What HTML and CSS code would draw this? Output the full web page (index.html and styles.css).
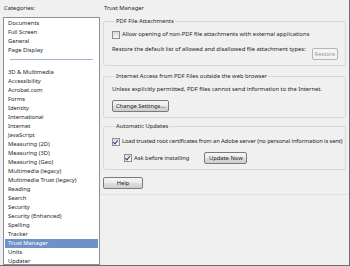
FILE: index.html
```html
<!DOCTYPE html>
<html lang="en">
<head>
  <meta charset="UTF-8">
  <title>Preferences - Trust Manager</title>
  <link rel="stylesheet" href="styles.css">
</head>
<body>
  <div class="window">
    <div class="sidebar">
      <div class="cat-label">Categories:</div>
      <ul class="cat-list">
        <li>Documents</li>
        <li>Full Screen</li>
        <li>General</li>
        <li>Page Display</li>
        <li class="sep"></li>
        <li>3D &amp; Multimedia</li>
        <li>Accessibility</li>
        <li>Acrobat.com</li>
        <li>Forms</li>
        <li>Identity</li>
        <li>International</li>
        <li>Internet</li>
        <li>JavaScript</li>
        <li>Measuring (2D)</li>
        <li>Measuring (3D)</li>
        <li>Measuring (Geo)</li>
        <li>Multimedia (legacy)</li>
        <li>Multimedia Trust (legacy)</li>
        <li>Reading</li>
        <li>Search</li>
        <li>Security</li>
        <li>Security (Enhanced)</li>
        <li>Spelling</li>
        <li>Tracker</li>
        <li class="selected">Trust Manager</li>
        <li>Units</li>
        <li>Updater</li>
      </ul>
    </div>

    <div class="panel">
      <div class="panel-title">Trust Manager</div>

      <fieldset class="group group-attach">
        <legend>PDF File Attachments</legend>
        <div class="check"><span class="box"></span>Allow opening of non-PDF file attachments with external applications</div>
        <div class="restore-row">
          <span>Restore the default list of allowed and disallowed file attachment types:</span>
          <button class="btn btn-restore" disabled>Restore</button>
        </div>
      </fieldset>

      <fieldset class="group group-internet">
        <legend>Internet Access from PDF Files outside the web browser</legend>
        <div class="note">Unless explicitly permitted, PDF files cannot send information to the Internet.</div>
        <button class="btn btn-settings">Change Settings...</button>
      </fieldset>

      <fieldset class="group group-updates">
        <legend>Automatic Updates</legend>
        <div class="check check-certs"><span class="box checked"></span>Load trusted root certificates from an Adobe server (no personal information is sent)</div>
        <div class="ask-row">
          <div class="check"><span class="box checked"></span>Ask before installing</div>
          <button class="btn btn-update">Update Now</button>
        </div>
      </fieldset>

      <button class="btn btn-help">Help</button>
      <div class="panel-end"></div>
    </div>
  </div>
</body>
</html>
```

FILE: styles.css
```css
html, body {
  margin: 0;
  padding: 0;
}

body {
  font-family: 'Noto Sans', 'Open Sans', sans-serif;
  font-size: 5.8px;
  color: #1e1e1e;
  background-color: #f0f0f0;
}

.window {
  width: 350px;
  height: 266px;
  box-sizing: border-box;
  border-right: 1px solid #6e6e6e;
  border-bottom: 1px solid #6e6e6e;
  display: flex;
  overflow: hidden;
}

/* left column */

.sidebar {
  width: 97px;
  padding-left: 3px;
  flex-shrink: 0;
  display: flex;
  flex-direction: column;
}

.cat-label {
  line-height: 9px;
  padding: 4px 0 4px 1px;
}

.cat-list {
  list-style: none;
  margin: 0;
  padding: 1px 0 0 0;
  background-color: #ffffff;
  border: 1px solid #8a8f98;
  flex: 1;
  overflow: hidden;
}

.cat-list li {
  line-height: 9px;
  height: 9px;
  padding-left: 4px;
  white-space: nowrap;
}

.cat-list li.sep::after {
  content: "";
  display: block;
  margin: 4px 6px 0 2px;
  border-top: 1px solid #9fb1d8;
}

.cat-list li.selected {
  background-color: #7090c8;
  color: #ffffff;
  margin: 0 1px;
  padding-left: 3px;
}

/* right column */

.panel {
  flex: 1;
  min-width: 0;
  padding: 4px 3px 0 3px;
}

.panel-title {
  line-height: 9px;
  margin-bottom: 4px;
  padding-left: 1px;
}

.group {
  min-width: 0;
  margin: 0;
  padding: 0 7px 5px 8px;
  border: 1px solid #d9d9d9;
  border-radius: 2px;
}

.group legend {
  line-height: 9px;
  padding: 0 1px;
  margin-left: 3px;
  white-space: nowrap;
}

.check {
  display: flex;
  align-items: center;
  line-height: 9px;
  white-space: nowrap;
}

.box {
  width: 6px;
  height: 6px;
  flex-shrink: 0;
  border: 1px solid #8e8f8f;
  background: linear-gradient(#dcdcdc, #f6f6f6);
  margin-right: 2px;
  position: relative;
}

.box.checked::after {
  content: "";
  position: absolute;
  left: 1px;
  top: 0;
  width: 2px;
  height: 4px;
  border-right: 1px solid #27408b;
  border-bottom: 1px solid #27408b;
  transform: rotate(40deg);
}

.group-attach .check {
  margin-top: 4px;
}

.restore-row {
  display: flex;
  justify-content: space-between;
  align-items: flex-start;
  margin-top: 6px;
  line-height: 9px;
  white-space: nowrap;
}

.btn {
  display: block;
  font-family: inherit;
  font-size: 5.8px;
  color: #1e1e1e;
  height: 12px;
  padding: 0;
  white-space: nowrap;
  border: 1px solid #7a7a7a;
  border-radius: 2px;
  background: linear-gradient(#f4f4f4 0%, #ebebeb 50%, #dddddd 51%, #cfcfcf 100%);
}

.btn:disabled {
  color: #a0a0a0;
  border-color: #b5b5b5;
  background: #f4f4f4;
}

.btn-restore {
  width: 26px;
  margin-top: 3px;
}

.group-internet {
  margin-top: 6px;
}

.note {
  line-height: 9px;
  margin-top: 4px;
  white-space: nowrap;
}

.btn-settings {
  width: 57px;
  margin-top: 6px;
}

.group-updates {
  margin-top: 4px;
}

.group-updates > .check {
  margin-top: 6px;
}

.check-certs {
  letter-spacing: -0.11px;
}

.ask-row {
  display: flex;
  align-items: center;
  margin-top: 6px;
  padding-left: 12px;
}

.btn-update {
  width: 43px;
  margin-left: 15px;
}

.btn-help {
  width: 40px;
  margin-top: 7px;
}

.panel-end {
  margin: 5px -3px 0 -3px;
  border-top: 1px solid #e2e2e2;
}
```
